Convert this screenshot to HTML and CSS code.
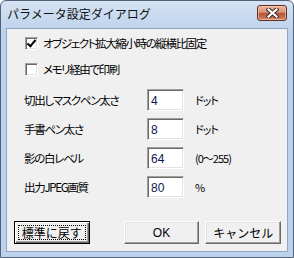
FILE: index.html
```html
<!DOCTYPE html>
<html lang="ja">
<head>
  <meta charset="UTF-8">
  <title>パラメータ設定ダイアログ</title>
  <link rel="stylesheet" href="styles.css">
</head>
<body>
  <div class="window">
    <div class="titlebar">
      <span class="title">パラメータ設定ダイアログ</span>
      <button class="close" title="閉じる">
        <svg width="13" height="10" viewBox="0 0 13 10">
          <path d="M2.5 1.5 L10.5 8.5 M10.5 1.5 L2.5 8.5" stroke="#3a2a24" stroke-width="4.2" stroke-linecap="square"/>
          <path d="M2.5 1.5 L10.5 8.5 M10.5 1.5 L2.5 8.5" stroke="#fff" stroke-width="2.2" stroke-linecap="square"/>
        </svg>
      </button>
    </div>

    <div class="client">
      <!-- チェックボックス -->
      <label class="check">
        <span class="box checked"></span>
        <span>オブジェクト拡大縮小時の縦横比固定</span>
      </label>
      <label class="check">
        <span class="box"></span>
        <span>メモリ経由で印刷</span>
      </label>

      <!-- 数値入力 -->
      <div class="fields">
        <div class="row">
          <span class="label">切出しマスクペン太さ</span>
          <input type="text" class="num" value="4">
          <span class="unit">ドット</span>
        </div>
        <div class="row">
          <span class="label">手書ペン太さ</span>
          <input type="text" class="num" value="8">
          <span class="unit">ドット</span>
        </div>
        <div class="row">
          <span class="label">影の白レベル</span>
          <input type="text" class="num" value="64">
          <span class="unit">(0〜255)</span>
        </div>
        <div class="row">
          <span class="label">出力JPEG画質</span>
          <input type="text" class="num" value="80">
          <span class="unit">%</span>
        </div>
      </div>

      <!-- ボタン -->
      <div class="buttons">
        <button class="btn default"><span class="focus">標準に戻す</span></button>
        <button class="btn ok">OK</button>
        <button class="btn">キャンセル</button>
      </div>
    </div>
  </div>
</body>
</html>
```

FILE: styles.css
```css
body {
  margin: 0;
  background: #fff;
  font-family: "Noto Sans CJK JP", "Liberation Sans", sans-serif;
  font-size: 12px;
  color: #000;
}
.window {
  width: 294px;
  height: 258px;
  box-sizing: border-box;
  border: 1px solid #4f6279;
  border-radius: 6px 6px 0 0;
  background: linear-gradient(#d6e3f3, #bcd2ec 30px, #bcd2ec);
  padding: 0 5px 5px;
  display: flex;
  flex-direction: column;
}
.titlebar {
  height: 27px;
  display: flex;
  align-items: center;
  justify-content: space-between;
  padding-left: 1px;
}
.title {
  font-size: 12px;
  color: #111;
  margin-top: -2px;
}
.close {
  width: 30px;
  height: 16px;
  margin-top: -3px;
  margin-right: 1px;
  padding: 0;
  border: 1px solid #5f2e20;
  border-radius: 3px;
  background: linear-gradient(#eab39c, #d99276 45%, #b4563a 50%, #c0684c 75%, #d58a6c);
  display: flex;
  align-items: center;
  justify-content: center;
  box-shadow: inset 0 0 0 1px rgba(255,220,200,0.5);
}
.client {
  flex: 1;
  background: #f0f0f0;
  border: 1px solid #8fa6c0;
  padding: 7px 0 0 17px;
  display: flex;
  flex-direction: column;
}
.check {
  display: flex;
  align-items: center;
  height: 14px;
  margin-bottom: 12px;
  font-size: 11.5px;
  font-feature-settings: "palt";
  letter-spacing: -1.4px;
}
.box {
  width: 11px;
  height: 11px;
  border: 1px solid;
  border-color: #a0a0a0 #fff #fff #a0a0a0;
  box-shadow: inset 1px 1px 0 #696969, inset -1px -1px 0 #e3e3e3;
  background: #fff;
  margin-left: 1px;
  margin-right: 5px;
  position: relative;
}
.box.checked::after {
  content: "";
  position: absolute;
  left: 3px;
  top: 0;
  width: 3px;
  height: 7px;
  border: solid #000;
  border-width: 0 2px 2px 0;
  transform: rotate(40deg);
}
.fields {
  display: flex;
  flex-direction: column;
  gap: 7px;
  margin-top: 1px;
}
.row {
  display: flex;
  align-items: center;
  font-feature-settings: "palt";
}
.label {
  width: 123px;
  font-size: 11.5px;
  letter-spacing: -1.3px;
}
.num {
  width: 37px;
  height: 22px;
  box-sizing: border-box;
  margin: 0;
  padding: 2px 0 0 3px;
  border: 1px solid;
  border-color: #a0a0a0 #fff #fff #a0a0a0;
  box-shadow: inset 1px 1px 0 #696969, inset -1px -1px 0 #e3e3e3;
  background: #fff;
  font-family: "Liberation Sans", sans-serif;
  font-size: 12px;
  color: #0c1850;
  outline: none;
}
.unit {
  margin-left: 11px;
  font-size: 11px;
  letter-spacing: -1px;
}
.buttons {
  display: flex;
  margin-top: 23px;
  margin-left: -10px;
}
.btn {
  width: 76px;
  height: 23px;
  padding: 0;
  margin-right: 6px;
  background: #f0f0f0;
  border: 1px solid;
  border-color: #fff #696969 #696969 #fff;
  box-shadow: inset -1px -1px 0 #a0a0a0, inset 1px 1px 0 #e3e3e3;
  font-family: "Noto Sans CJK JP", "Liberation Sans", sans-serif;
  font-size: 12px;
  color: #000;
}
.btn.ok {
  margin-left: 28px;
  font-family: "Liberation Sans", sans-serif;
}
.btn.default {
  display: flex;
  padding: 3px;
  border: 1px solid #000;
  box-shadow: inset 1px 1px 0 #fff, inset -1px -1px 0 #696969, inset -2px -2px 0 #a0a0a0;
}
.focus {
  flex: 1;
  display: flex;
  align-items: center;
  justify-content: center;
  border: 1px dotted #000;
  line-height: 14px;
}
```
